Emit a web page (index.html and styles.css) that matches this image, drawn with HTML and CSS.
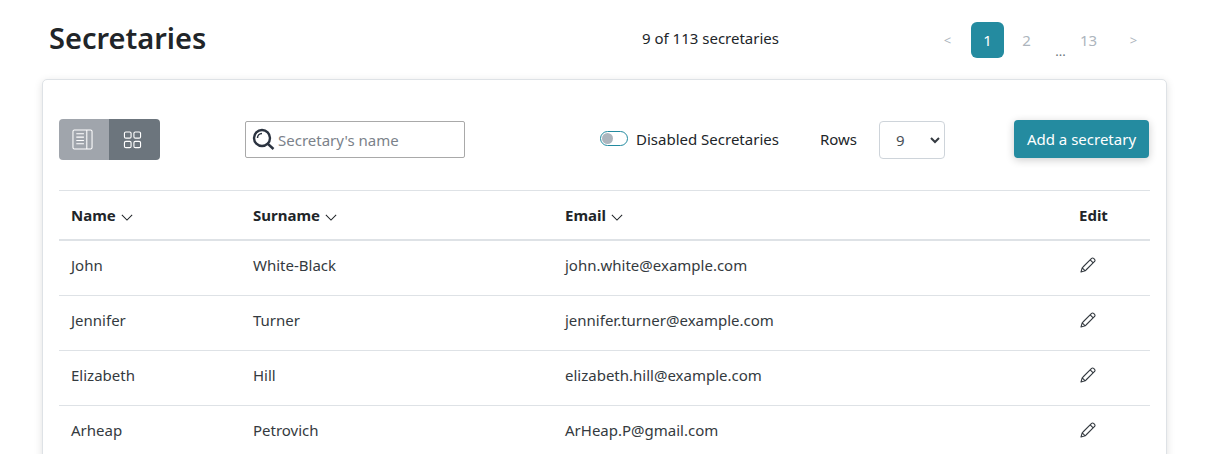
FILE: index.html
```html
<!DOCTYPE html>
<html lang="en">
<head>
<meta charset="utf-8">
<title>Secretaries</title>
<link rel="stylesheet" href="styles.css">
</head>
<body>
<svg class="defs" width="0" height="0" aria-hidden="true">
  <symbol id="chev" viewBox="0 0 14 8"><path d="M1 1l6 6 6-6" fill="none" stroke="currentColor" stroke-width="1.2"/></symbol>
  <symbol id="pencil" viewBox="0 0 16 16"><path d="M11.6 1.4a1.4 1.4 0 0 1 2 0l1 1a1.4 1.4 0 0 1 0 2L5.2 13.8 1 15l1.2-4.2zM10.2 2.8l3 3M2.2 10.8l3 3M3 10l8.6-8.6M6 13l8.6-8.6" fill="none" stroke="currentColor" stroke-width="1.1" stroke-linejoin="round"/></symbol>
</svg>
<header class="top">
  <h1 class="title">Secretaries</h1>
  <div class="count">9 of 113 secretaries</div>
  <nav class="pager">
    <span class="page page-arrow page-first">&lt;</span>
    <span class="page page-active">1</span>
    <span class="page">2</span>
    <span class="page-dots">...</span>
    <span class="page page-last">13</span>
    <span class="page page-arrow">&gt;</span>
  </nav>
</header>
<main class="card">
  <div class="toolbar">
    <div class="views">
      <span class="view view-list">
        <svg width="21" height="21" viewBox="0 0 22 22" fill="none" stroke="#fff" stroke-width="1.1"><rect x="1" y="1" width="20" height="20" rx="1.5"/><path d="M15.5 1v20M4.5 5h8M4.5 8.5h8M4.5 12h8M4.5 15.5h8"/></svg>
      </span>
      <span class="view view-grid">
        <svg width="19" height="18" viewBox="0 0 20 19" fill="none" stroke="#fff" stroke-width="1.2"><rect x="1.5" y="1" width="7" height="6.5" rx="1.5"/><rect x="11.5" y="1" width="7" height="6.5" rx="1.5"/><rect x="1.5" y="11" width="7" height="6.5" rx="1.5"/><rect x="11.5" y="11" width="7" height="6.5" rx="1.5"/></svg>
      </span>
    </div>
    <label class="search">
      <svg width="23" height="23" viewBox="0 0 23 23" fill="none" stroke="#2b3340"><circle cx="10" cy="10" r="8" stroke-width="2.4"/><path d="M5.5 10a4.5 4.5 0 0 1 4.5-4.5" stroke-width="1.5"/><path d="M16 16l5.5 5" stroke-width="2.4"/></svg>
      <input class="search-input" type="text" placeholder="Secretary's name">
    </label>
    <div class="toggle-wrap">
      <span class="toggle"><span class="knob"></span></span>
      <span class="toggle-label">Disabled Secretaries</span>
    </div>
    <div class="rows-wrap">
      <span class="rows-label">Rows</span>
      <span class="rows-select">9
        <svg class="rows-chev" width="12" height="8" viewBox="0 0 12 8"><path d="M2 2l4 4 4-4" fill="none" stroke="#343a40" stroke-width="2"/></svg>
      </span>
    </div>
    <button class="add" type="button">Add a secretary</button>
  </div>
  <table class="table">
    <colgroup><col class="c1"><col class="c2"><col class="c3"><col class="c4"></colgroup>
    <thead>
      <tr>
        <th>Name <svg class="sort" width="12" height="7"><use href="#chev"/></svg></th>
        <th>Surname <svg class="sort" width="12" height="7"><use href="#chev"/></svg></th>
        <th>Email <svg class="sort" width="12" height="7"><use href="#chev"/></svg></th>
        <th>Edit</th>
      </tr>
    </thead>
    <tbody>
      <tr><td>John</td><td>White-Black</td><td>john.white@example.com</td><td><svg class="edit" width="16" height="16"><use href="#pencil"/></svg></td></tr>
      <tr><td>Jennifer</td><td>Turner</td><td>jennifer.turner@example.com</td><td><svg class="edit" width="16" height="16"><use href="#pencil"/></svg></td></tr>
      <tr><td>Elizabeth</td><td>Hill</td><td>elizabeth.hill@example.com</td><td><svg class="edit" width="16" height="16"><use href="#pencil"/></svg></td></tr>
      <tr><td>Arheap</td><td>Petrovich</td><td>ArHeap.P@gmail.com</td><td><svg class="edit" width="16" height="16"><use href="#pencil"/></svg></td></tr>
    </tbody>
  </table>
</main>
</body>
</html>
```

FILE: styles.css
```css
* { box-sizing: border-box; }
html, body { height: 454px; overflow: hidden; }
body {
  margin: 0;
  background: #fff;
  color: #212529;
  font-family: "Noto Sans", "Open Sans", sans-serif;
  font-size: 15px;
}
.defs { position: absolute; }
.top {
  height: 79px;
  display: flex;
  align-items: center;
  padding: 0 0 0 49px;
}
.title {
  margin: 0 0 3px;
  width: 593px;
  font-size: 29px;
  font-weight: 600;
  line-height: 1.2;
  color: #212529;
}
.count { width: 289px; margin-bottom: 3px; font-size: 15px; }
.pager { display: flex; align-items: center; font-size: 15px; color: #adb5bd; margin-top: 1px; }
.page {
  width: 33px;
  height: 36px;
  display: flex;
  align-items: center;
  justify-content: center;
  margin-right: 6px;
}
.page-arrow { font-size: 13px; }
.page-first { margin-right: 7px; }
.page-last { margin-right: 12px; }
.page-active { background: #248ba0; color: #fff; border-radius: 6px; }
.page-dots { align-self: flex-end; width: 23px; text-align: center; color: #6c757d; font-size: 13px; line-height: 18px; margin-bottom: -2px; }
.card {
  margin: 0 38px 0 42px;
  height: 500px;
  border: 1px solid #dee2e6;
  border-radius: 5px;
  background: #fff;
  box-shadow: 0 2px 8px rgba(0, 0, 0, .12);
  padding: 39px 16px 0;
}
.toolbar { display: flex; align-items: center; height: 41px; margin-bottom: 30px; }
.views { display: flex; width: 101px; height: 41px; border-radius: 4px; overflow: hidden; }
.view { display: flex; align-items: center; justify-content: center; }
.view-list { width: 50px; background: #a0a5ac; padding-right: 3px; }
.view-grid { width: 51px; background: #6c757d; padding-right: 4px; }
.search {
  margin-left: 85px;
  width: 220px;
  height: 37px;
  display: flex;
  align-items: center;
  gap: 3px;
  padding-left: 6px;
  border: 1px solid #a9a9a9;
  border-radius: 2px;
}
.search-input {
  border: 0;
  outline: 0;
  padding: 0;
  min-width: 0;
  flex: 1;
  font: inherit;
  font-size: 15px;
  color: #212529;
}
.search-input::placeholder { color: #7b828a; opacity: 1; }
.toggle-wrap { margin-left: 135px; margin-bottom: 2px; display: flex; align-items: center; gap: 8px; }
.toggle {
  width: 28px;
  height: 15px;
  display: block;
  border: 1px solid #248ba0;
  border-radius: 8px;
  background: #fff;
  padding: 1px;
}
.knob { display: block; width: 11px; height: 11px; border-radius: 50%; background: #adb5bd; }
.toggle-label { font-size: 15px; }
.rows-wrap { margin-left: 41px; display: flex; align-items: center; gap: 22px; }
.rows-label { margin-bottom: 2px; }
.rows-select {
  width: 66px;
  height: 38px;
  position: relative;
  display: flex;
  align-items: center;
  padding-left: 16px;
  border: 1px solid #ced4da;
  border-radius: 4px;
  font-size: 15px;
  color: #495057;
}
.rows-chev { position: absolute; right: 3px; top: 14px; }
.add {
  margin-left: 69px;
  margin-bottom: 2px;
  width: 135px;
  height: 38px;
  border: 0;
  border-radius: 4px;
  background: #248ba0;
  color: #fff;
  font: inherit;
  font-size: 15px;
  box-shadow: 0 2px 8px rgba(0, 0, 0, .2);
}
.table { width: 1091px; table-layout: fixed; border-collapse: collapse; }
.c1 { width: 182px; }
.c2 { width: 312px; }
.c3 { width: 514px; }
.c4 { width: 83px; }
th, td { padding: 0 12px; text-align: left; border-top: 1px solid #dee2e6; }
th { height: 49px; font-weight: 700; font-size: 15px; border-bottom: 2px solid #dee2e6; }
td { height: 55px; padding-bottom: 6px; color: #343a40; font-size: 15px; }
tbody tr:first-child td { border-top: 0; height: 56px; }
.sort { color: #212529; margin-left: 1px; vertical-align: 0; }
.edit { color: #343a40; margin-left: 1px; vertical-align: -2px; }
```
